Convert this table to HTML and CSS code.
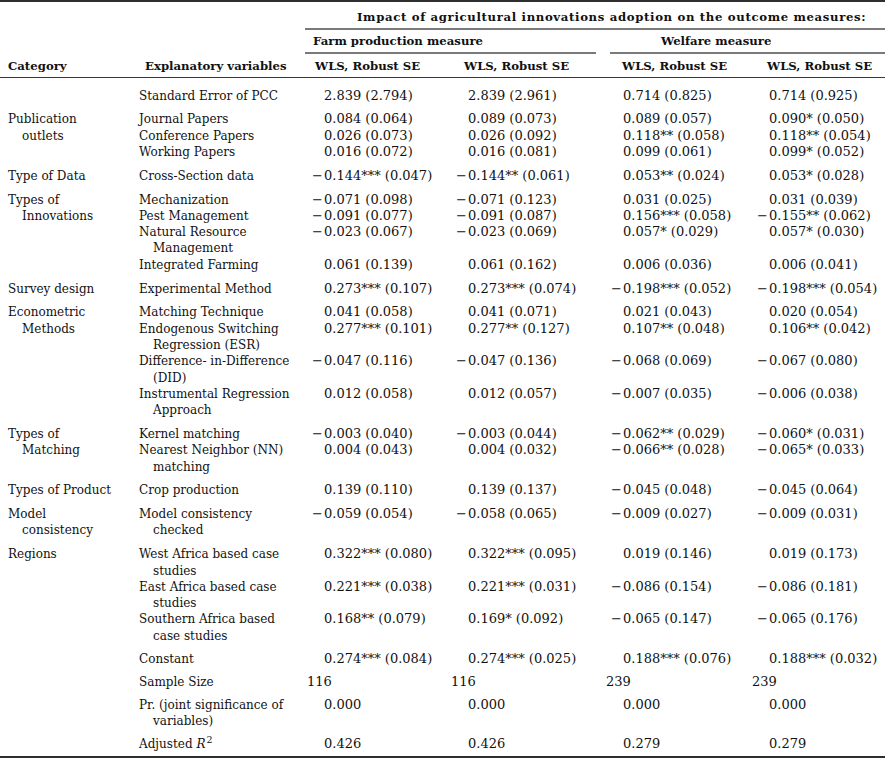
FILE: index.html
```html
<!DOCTYPE html>
<html lang="en">
<head>
<meta charset="utf-8">
<title>Impact of agricultural innovations adoption</title>
<link rel="stylesheet" href="styles.css">
</head>
<body>
<table class="tbl">
  <colgroup>
    <col class="c0"><col class="c1"><col class="c2"><col class="c3"><col class="c4"><col class="c5">
  </colgroup>
  <thead>
    <tr class="ha">
      <th colspan="2"></th>
      <th colspan="4"><div class="rule r-impact">Impact of agricultural innovations adoption on the outcome measures:</div></th>
    </tr>
    <tr class="hb">
      <th colspan="2"></th>
      <th colspan="2"><div class="rule r-farm">Farm production measure</div></th>
      <th colspan="2"><div class="rule r-welfare">Welfare measure</div></th>
    </tr>
    <tr class="hc">
      <th class="h-cat">Category</th>
      <th class="h-var">Explanatory variables</th>
      <th class="h1">WLS, Robust SE</th>
      <th class="h2">WLS, Robust SE</th>
      <th class="h3">WLS, Robust SE</th>
      <th class="h4">WLS, Robust SE</th>
    </tr>
  </thead>
  <tbody>
    <tr class="gs ge first">
      <td class="cat"></td><td class="var">Standard Error of PCC</td>
      <td class="v">2.839 (2.794)</td><td class="v">2.839 (2.961)</td><td class="v">0.714 (0.825)</td><td class="v">0.714 (0.925)</td>
    </tr>

    <tr class="gs">
      <td class="cat" rowspan="3">Publication<br>outlets</td><td class="var">Journal Papers</td>
      <td class="v">0.084 (0.064)</td><td class="v">0.089 (0.073)</td><td class="v">0.089 (0.057)</td><td class="v">0.090* (0.050)</td>
    </tr>
    <tr>
      <td class="var">Conference Papers</td>
      <td class="v">0.026 (0.073)</td><td class="v">0.026 (0.092)</td><td class="v">0.118** (0.058)</td><td class="v">0.118** (0.054)</td>
    </tr>
    <tr class="ge">
      <td class="var">Working Papers</td>
      <td class="v">0.016 (0.072)</td><td class="v">0.016 (0.081)</td><td class="v">0.099 (0.061)</td><td class="v">0.099* (0.052)</td>
    </tr>

    <tr class="gs ge">
      <td class="cat">Type of Data</td><td class="var">Cross-Section data</td>
      <td class="v"><span class="m">−</span>0.144*** (0.047)</td><td class="v"><span class="m">−</span>0.144** (0.061)</td><td class="v">0.053** (0.024)</td><td class="v">0.053* (0.028)</td>
    </tr>

    <tr class="gs">
      <td class="cat" rowspan="4">Types of<br>Innovations</td><td class="var">Mechanization</td>
      <td class="v"><span class="m">−</span>0.071 (0.098)</td><td class="v"><span class="m">−</span>0.071 (0.123)</td><td class="v">0.031 (0.025)</td><td class="v">0.031 (0.039)</td>
    </tr>
    <tr>
      <td class="var">Pest Management</td>
      <td class="v"><span class="m">−</span>0.091 (0.077)</td><td class="v"><span class="m">−</span>0.091 (0.087)</td><td class="v">0.156*** (0.058)</td><td class="v"><span class="m">−</span>0.155** (0.062)</td>
    </tr>
    <tr>
      <td class="var">Natural Resource<br>Management</td>
      <td class="v"><span class="m">−</span>0.023 (0.067)</td><td class="v"><span class="m">−</span>0.023 (0.069)</td><td class="v">0.057* (0.029)</td><td class="v">0.057* (0.030)</td>
    </tr>
    <tr class="ge">
      <td class="var">Integrated Farming</td>
      <td class="v">0.061 (0.139)</td><td class="v">0.061 (0.162)</td><td class="v">0.006 (0.036)</td><td class="v">0.006 (0.041)</td>
    </tr>

    <tr class="gs ge">
      <td class="cat">Survey design</td><td class="var">Experimental Method</td>
      <td class="v">0.273*** (0.107)</td><td class="v">0.273*** (0.074)</td><td class="v"><span class="m">−</span>0.198*** (0.052)</td><td class="v"><span class="m">−</span>0.198*** (0.054)</td>
    </tr>

    <tr class="gs">
      <td class="cat" rowspan="4">Econometric<br>Methods</td><td class="var">Matching Technique</td>
      <td class="v">0.041 (0.058)</td><td class="v">0.041 (0.071)</td><td class="v">0.021 (0.043)</td><td class="v">0.020 (0.054)</td>
    </tr>
    <tr>
      <td class="var">Endogenous Switching<br>Regression (ESR)</td>
      <td class="v">0.277*** (0.101)</td><td class="v">0.277** (0.127)</td><td class="v">0.107** (0.048)</td><td class="v">0.106** (0.042)</td>
    </tr>
    <tr>
      <td class="var">Difference- in-Difference<br>(DID)</td>
      <td class="v"><span class="m">−</span>0.047 (0.116)</td><td class="v"><span class="m">−</span>0.047 (0.136)</td><td class="v"><span class="m">−</span>0.068 (0.069)</td><td class="v"><span class="m">−</span>0.067 (0.080)</td>
    </tr>
    <tr class="ge">
      <td class="var">Instrumental Regression<br>Approach</td>
      <td class="v">0.012 (0.058)</td><td class="v">0.012 (0.057)</td><td class="v"><span class="m">−</span>0.007 (0.035)</td><td class="v"><span class="m">−</span>0.006 (0.038)</td>
    </tr>

    <tr class="gs">
      <td class="cat" rowspan="2">Types of<br>Matching</td><td class="var">Kernel matching</td>
      <td class="v"><span class="m">−</span>0.003 (0.040)</td><td class="v"><span class="m">−</span>0.003 (0.044)</td><td class="v"><span class="m">−</span>0.062** (0.029)</td><td class="v"><span class="m">−</span>0.060* (0.031)</td>
    </tr>
    <tr class="ge">
      <td class="var">Nearest Neighbor (NN)<br>matching</td>
      <td class="v">0.004 (0.043)</td><td class="v">0.004 (0.032)</td><td class="v"><span class="m">−</span>0.066** (0.028)</td><td class="v"><span class="m">−</span>0.065* (0.033)</td>
    </tr>

    <tr class="gs ge">
      <td class="cat">Types of Product</td><td class="var">Crop production</td>
      <td class="v">0.139 (0.110)</td><td class="v">0.139 (0.137)</td><td class="v"><span class="m">−</span>0.045 (0.048)</td><td class="v"><span class="m">−</span>0.045 (0.064)</td>
    </tr>

    <tr class="gs ge">
      <td class="cat">Model<br>consistency</td><td class="var">Model consistency<br>checked</td>
      <td class="v"><span class="m">−</span>0.059 (0.054)</td><td class="v"><span class="m">−</span>0.058 (0.065)</td><td class="v"><span class="m">−</span>0.009 (0.027)</td><td class="v"><span class="m">−</span>0.009 (0.031)</td>
    </tr>

    <tr class="gs">
      <td class="cat" rowspan="3">Regions</td><td class="var">West Africa based case<br>studies</td>
      <td class="v">0.322*** (0.080)</td><td class="v">0.322*** (0.095)</td><td class="v">0.019 (0.146)</td><td class="v">0.019 (0.173)</td>
    </tr>
    <tr>
      <td class="var">East Africa based case<br>studies</td>
      <td class="v">0.221*** (0.038)</td><td class="v">0.221*** (0.031)</td><td class="v"><span class="m">−</span>0.086 (0.154)</td><td class="v"><span class="m">−</span>0.086 (0.181)</td>
    </tr>
    <tr class="ge">
      <td class="var">Southern Africa based<br>case studies</td>
      <td class="v">0.168** (0.079)</td><td class="v">0.169* (0.092)</td><td class="v"><span class="m">−</span>0.065 (0.147)</td><td class="v"><span class="m">−</span>0.065 (0.176)</td>
    </tr>

    <tr class="gs ge tight">
      <td class="cat"></td><td class="var">Constant</td>
      <td class="v">0.274*** (0.084)</td><td class="v">0.274*** (0.025)</td><td class="v">0.188*** (0.076)</td><td class="v">0.188*** (0.032)</td>
    </tr>
    <tr class="gs ge tight">
      <td class="cat"></td><td class="var">Sample Size</td>
      <td class="n">116</td><td class="n">116</td><td class="n">239</td><td class="n">239</td>
    </tr>
    <tr class="gs ge tight">
      <td class="cat"></td><td class="var">Pr. (joint significance of<br>variables)</td>
      <td class="v">0.000</td><td class="v">0.000</td><td class="v">0.000</td><td class="v">0.000</td>
    </tr>
    <tr class="gs ge tight last">
      <td class="cat"></td><td class="var">Adjusted <i>R</i><sup>2</sup></td>
      <td class="v">0.426</td><td class="v">0.426</td><td class="v">0.279</td><td class="v">0.279</td>
    </tr>
  </tbody>
</table>
</body>
</html>
```

FILE: styles.css
```css
html, body {
  margin: 0;
  padding: 0;
  background: #ffffff;
}

body {
  font-family: "DejaVu Serif", "Liberation Serif", serif;
  font-size: 12px;
  line-height: 16.3px;
  color: #111111;
}

.tbl {
  width: 885px;
  table-layout: fixed;
  border-collapse: collapse;
  border-spacing: 0;
  border-top: 2px solid #2e2e2e;
  border-bottom: 2px solid #2e2e2e;
}

.c0 { width: 139px; }
.c1 { width: 168px; }
.c2 { width: 144px; }
.c3 { width: 155px; }
.c4 { width: 146px; }
.c5 { width: 133px; }

th, td {
  padding: 0;
  text-align: left;
  vertical-align: top;
  white-space: nowrap;
  line-height: 16.3px;
}

th {
  font-weight: bold;
  font-size: 11.7px;
}

/* header rows */
.ha th { padding-top: 7px; }
.hb th { padding-top: 2.5px; }

.rule {
  border-bottom: 2px solid #7a7a7a;
  padding-bottom: 3.2px;
}

.r-impact {
  padding-left: 52px;
  margin-left: -2px;
  letter-spacing: 0.65px;
}
.r-farm { padding-left: 8px; margin-left: -2px; margin-right: 10px; }
.r-welfare { padding-left: 51px; margin-left: 4px; }

.hc th {
  padding-top: 3.35px;
  padding-bottom: 3px;
  border-bottom: 1px solid #3a3a3a;
}

.hc .h-cat { padding-left: 8px; }
.hc .h-var { padding-left: 6px; }
.hc .h1 { padding-left: 8px; }
.hc .h2 { padding-left: 13px; }
.hc .h3 { padding-left: 16px; }
.hc .h4 { padding-left: 15px; }

/* body */
.cat {
  padding-left: 22px;
  text-indent: -14px;
}

.var {
  padding-left: 14px;
  text-indent: -14px;
}

.v, .n {
  font-size: 13px;
}

.v { padding-left: 17px; }
.n { padding-left: 0; }

.m {
  display: inline-block;
  width: 12px;
  margin-left: -12px;
  text-indent: 0;
}

tr.gs td { padding-top: 3.75px; }
tr.ge td { padding-bottom: 3.75px; }
tr.first td { padding-top: 9.5px; }
tr.tight td { padding-top: 3.3px; padding-bottom: 3.3px; }
tr.last td { padding-bottom: 4px; }

sup {
  font-size: 9.5px;
  line-height: 0;
  vertical-align: 5px;
  margin-left: 1px;
}

i { font-style: italic; }
```
